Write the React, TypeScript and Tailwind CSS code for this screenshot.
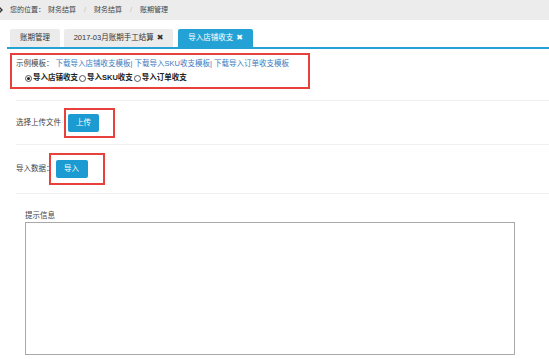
import React from "react";

const font = { fontFamily: '"Liberation Sans", "Noto Sans CJK SC", sans-serif' };
const xfont = { fontFamily: '"DejaVu Sans", sans-serif' };

export default function App() {
  return (
    <div className="w-[549px] h-[359px] overflow-hidden bg-white text-[#333]" style={font}>
      {/* breadcrumb */}
      <div className="h-[20px] bg-[#ececec] flex items-center text-[7px] text-[#444]">
        <svg width="6" height="8" viewBox="0 0 6 8" className="ml-[-2px] mr-[6px]">
          <path d="M1 1 L4 4 L1 7" fill="none" stroke="#333" strokeWidth="1.4" />
        </svg>
        <span>您的位置：</span>
        <span className="ml-[3px]">财务结算</span>
        <span className="mx-[8px] text-[#bbb]">/</span>
        <span>财务结算</span>
        <span className="mx-[8px] text-[#bbb]">/</span>
        <span>账期管理</span>
      </div>

      {/* tabs */}
      <div className="pt-[9px] pl-[7px]">
        <div className="flex gap-[4px] pl-[3px] h-[18px] items-end text-[7.5px]">
          <div className="w-[50px] h-[18px] bg-[#ebebeb] rounded-t-[2px] flex items-center justify-center text-[#333]">
            账期管理
          </div>
          <div className="w-[109px] h-[18px] bg-[#ebebeb] rounded-t-[2px] flex items-center justify-center text-[#333] gap-[3px]">
            <span>2017-03月账期手工结算</span>
            <span className="text-[8px] font-bold" style={xfont}>✖</span>
          </div>
          <div className="ml-[1px] w-[75px] h-[18px] bg-[#24a2d6] rounded-t-[2px] flex items-center justify-center text-white gap-[3px]">
            <span>导入店铺收支</span>
            <span className="text-[8px] font-bold" style={xfont}>✖</span>
          </div>
        </div>
        <div className="h-[2px] bg-[#24a2d6]" />
      </div>

      {/* template box */}
      <div className="pt-[4px] pl-[10px]">
        <div className="w-[300px] h-[36px] border-[2px] border-[#e8413c] pl-[4px] flex flex-col justify-center gap-[4px] text-[7.5px]">
          <div className="flex items-center h-[10px] leading-none">
            <span className="text-[#444]">示例模板：</span>
            <span className="ml-[2px] text-[#3a7cc0]">下载导入店铺收支模板| 下载导入SKU收支模板| 下载导入订单收支模板</span>
          </div>
          <div className="flex items-center h-[10px] leading-none pl-[9px] text-[#222] font-semibold">
            <span className="w-[7px] h-[7px] rounded-full border border-[#555] flex items-center justify-center mr-[1px]">
              <span className="w-[3px] h-[3px] rounded-full bg-[#222]" />
            </span>
            <span>导入店铺收支</span>
            <span className="w-[7px] h-[7px] rounded-full border border-[#555] ml-[1px] mr-[1px]" />
            <span>导入SKU收支</span>
            <span className="w-[7px] h-[7px] rounded-full border border-[#555] ml-[1px] mr-[1px]" />
            <span>导入订单收支</span>
          </div>
        </div>
      </div>

      {/* upload row */}
      <div className="ml-[16px] mt-[11px] border-t border-[#f0f0f0] h-[44px] flex items-center text-[7.5px] text-[#444]">
        <span>选择上传文件</span>
        <div className="ml-[3px] w-[51px] h-[30px] border-[2px] border-[#e8413c] flex items-center pl-[2px]">
          <div className="w-[31px] h-[18px] bg-[#1b9bd1] rounded-[2px] text-white flex items-center justify-center">上传</div>
        </div>
      </div>

      {/* import row */}
      <div className="ml-[16px] border-t border-[#f0f0f0] h-[49px] flex items-center text-[7.5px] text-[#444]">
        <span>导入数据：</span>
        <div className="ml-[-5px] w-[56px] h-[32px] border-[2px] border-[#e8413c] flex items-center pl-[5px]">
          <div className="w-[32px] h-[18px] bg-[#1b9bd1] rounded-[2px] text-white flex items-center justify-center">导入</div>
        </div>
      </div>

      {/* info */}
      <div className="ml-[16px] border-t border-[#f0f0f0] pt-[17px] pl-[9px]">
        <div className="text-[7.5px] text-[#444] leading-[10px]">提示信息</div>
        <div className="w-[490px] h-[133px] border border-[#a9a9a9] mt-[1px]" />
      </div>
    </div>
  );
}
